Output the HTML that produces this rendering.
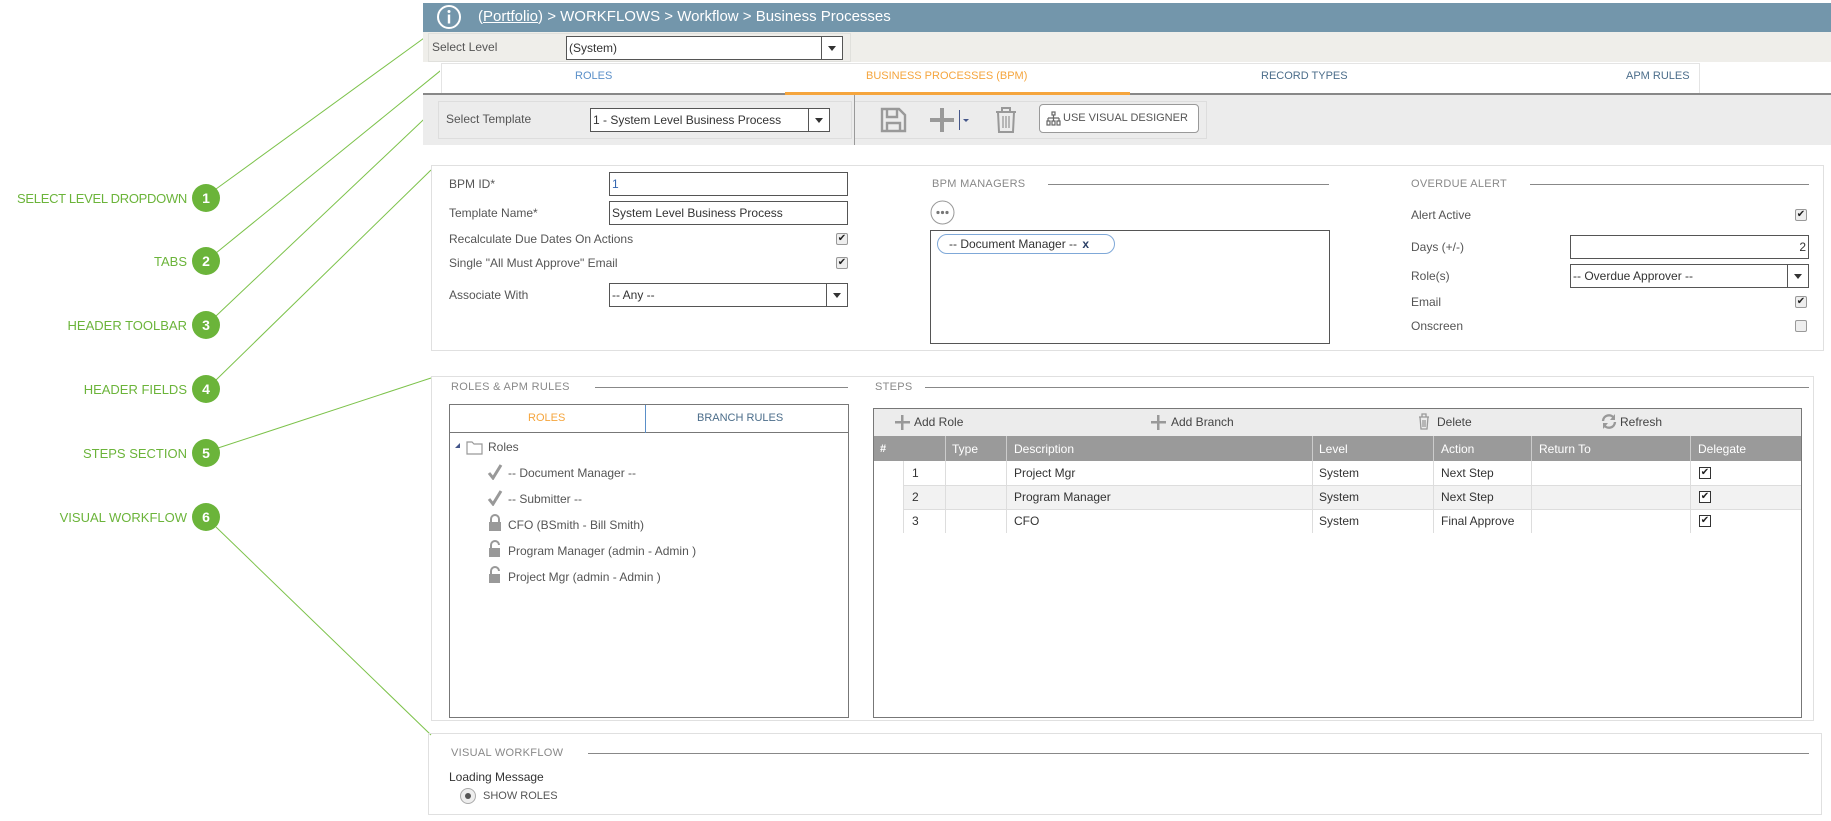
<!DOCTYPE html>
<html><head><meta charset="utf-8"><style>
*{box-sizing:border-box;margin:0;padding:0}
body{width:1831px;height:821px;position:relative;background:#fff;font-family:"Liberation Sans",sans-serif;font-size:12px;color:#555;overflow:hidden}
.a{position:absolute}
.t{position:absolute;white-space:nowrap;line-height:14px}
.ann{position:absolute;right:1644px;color:#6bb43a;font-size:13px;white-space:nowrap;line-height:16px}
.num{position:absolute;width:28px;height:28px;border-radius:50%;background:#6bb43a;color:#fff;font-size:14px;font-weight:bold;text-align:center;line-height:28px}
.inp{position:absolute;border:1px solid #555;background:#fff;height:24px;padding:4px 2px;color:#333;line-height:14px;white-space:nowrap}
.dd{position:absolute;border:1px solid #555;background:#fff;height:24px;padding:4px 2px;color:#333;line-height:14px;white-space:nowrap}
.dd:after{content:"";position:absolute;right:0;top:0;width:20px;height:22px;border-left:1px solid #555}
.dd i{position:absolute;right:6px;top:9px;border-left:4px solid transparent;border-right:4px solid transparent;border-top:5px solid #333}
.cb{position:absolute;width:12px;height:12px;border:1px solid #999;border-radius:2px;background:#eee;font-size:10px;line-height:10px;text-align:center;color:#222}
.sec{position:absolute;color:#888;font-size:11px;letter-spacing:.3px;line-height:14px}
.hl{position:absolute;height:1px;background:#888}
.lbl{color:#555}
</style></head><body>

<svg class="a" style="left:0;top:0" width="440" height="821">
<g stroke="#7cc24a" stroke-width="1" fill="none">
<line x1="216" y1="189" x2="431" y2="33"/>
<line x1="216" y1="253" x2="445" y2="67"/>
<line x1="216" y1="316" x2="439" y2="105"/>
<line x1="216" y1="380" x2="431" y2="170"/>
<line x1="218" y1="448" x2="431" y2="378"/>
<line x1="216" y1="527" x2="431" y2="735"/>
</g></svg>
<div class="ann" style="top:191px;letter-spacing:-0.3px">SELECT LEVEL DROPDOWN</div><div class="num" style="left:192px;top:184px">1</div>
<div class="ann" style="top:254px">TABS</div><div class="num" style="left:192px;top:247px">2</div>
<div class="ann" style="top:318px">HEADER TOOLBAR</div><div class="num" style="left:192px;top:311px">3</div>
<div class="ann" style="top:382px">HEADER FIELDS</div><div class="num" style="left:192px;top:375px">4</div>
<div class="ann" style="top:446px">STEPS SECTION</div><div class="num" style="left:192px;top:439px">5</div>
<div class="ann" style="top:510px">VISUAL WORKFLOW</div><div class="num" style="left:192px;top:503px">6</div>

<div class="a" style="left:423px;top:3px;width:1408px;height:29px;background:#7396ab"></div>
<svg class="a" style="left:436px;top:4px" width="26" height="26"><circle cx="13" cy="13" r="11" fill="none" stroke="#fff" stroke-width="2"/><circle cx="13" cy="7.5" r="1.5" fill="#fff"/><rect x="11.8" y="10.5" width="2.4" height="9" fill="#fff"/></svg>
<div class="t" style="left:478px;top:8px;color:#fff;font-size:15px;line-height:18px">(<u>Portfolio</u>) &gt; WORKFLOWS &gt; Workflow &gt; Business Processes</div>

<div class="a" style="left:423px;top:32px;width:1408px;height:30px;background:#efeeea"></div>
<div class="a" style="left:428px;top:33px;width:423px;height:29px;border:1px solid #e0e0dc"></div>
<div class="t lbl" style="left:432px;top:40px">Select Level</div>
<div class="dd" style="left:566px;top:36px;width:277px">(System)<i></i></div>

<div class="a" style="left:441px;top:63px;width:1259px;height:31px;border:1px solid #e4e4e4;border-bottom:none"></div>
<div class="a" style="left:423px;top:93px;width:1408px;height:2px;background:#888"></div>
<div class="a" style="left:785px;top:92px;width:345px;height:3px;background:#f5a53d"></div>
<div class="t" style="left:575px;top:69px;color:#5a8fc8;font-size:11px">ROLES</div>
<div class="t" style="left:866px;top:69px;color:#f5a53d;font-size:11px">BUSINESS PROCESSES (BPM)</div>
<div class="t" style="left:1261px;top:69px;color:#4b6d8a;font-size:11px">RECORD TYPES</div>
<div class="t" style="left:1626px;top:69px;color:#4b6d8a;font-size:11px">APM RULES</div>

<div class="a" style="left:423px;top:95px;width:1408px;height:50px;background:#ececec"></div>
<div class="a" style="left:438px;top:101px;width:414px;height:38px;border:1px solid #ddd"></div>
<div class="a" style="left:854px;top:95px;width:1px;height:50px;background:#999"></div>
<div class="a" style="left:855px;top:101px;width:352px;height:38px;border:1px solid #ddd;border-left:none"></div>
<div class="t lbl" style="left:446px;top:112px">Select Template</div>
<div class="dd" style="left:590px;top:108px;width:240px">1 - System Level Business Process<i></i></div>
<svg class="a" style="left:879px;top:106px" width="30" height="28"><g fill="none" stroke="#999" stroke-width="2.4"><path d="M3 3h17l6 6v16H3z"/><path d="M8 3v8h10V3"/><path d="M8 25v-8h13v8"/></g></svg>
<svg class="a" style="left:929px;top:106px" width="50" height="28"><rect x="11" y="2" width="4" height="24" fill="#999"/><rect x="1" y="12" width="24" height="4" fill="#999"/><rect x="30" y="4" width="1" height="20" fill="#44568a"/><path d="M34 13h6l-3 3z" fill="#44568a"/></svg>
<svg class="a" style="left:994px;top:106px" width="24" height="28"><g fill="none" stroke="#999" stroke-width="2"><path d="M2 6h20M8 6V2h8v4M4 6l1 20h14l1-20"/><path d="M9 10v12M12 10v12M15 10v12" stroke-width="1.3"/></g></svg>
<div class="a" style="left:1039px;top:104px;width:160px;height:29px;border:1px solid #999;border-radius:4px;background:#fff"></div>
<svg class="a" style="left:1046px;top:111px" width="16" height="16"><g fill="none" stroke="#666" stroke-width="1.2"><rect x="6" y="1" width="3" height="3"/><path d="M7.5 4v3M2 7h11M2 7v3M7.5 7v3M13 7v3"/><rect x="1" y="10" width="3" height="4"/><rect x="6" y="10" width="3" height="4"/><rect x="11" y="10" width="3" height="4"/></g></svg>
<div class="t" style="left:1063px;top:111px;color:#555;font-size:11px">USE VISUAL DESIGNER</div>

<div class="a" style="left:431px;top:165px;width:1393px;height:186px;border:1px solid #e0e0e0"></div>
<div class="t lbl" style="left:449px;top:177px">BPM ID*</div>
<div class="inp" style="left:609px;top:172px;width:239px;color:#3466b0">1</div>
<div class="t lbl" style="left:449px;top:206px">Template Name*</div>
<div class="inp" style="left:609px;top:201px;width:239px">System Level Business Process</div>
<div class="t lbl" style="left:449px;top:232px">Recalculate Due Dates On Actions</div>
<div class="cb" style="left:836px;top:233px">✔</div>
<div class="t lbl" style="left:449px;top:256px">Single "All Must Approve" Email</div>
<div class="cb" style="left:836px;top:257px">✔</div>
<div class="t lbl" style="left:449px;top:288px">Associate With</div>
<div class="dd" style="left:609px;top:283px;width:239px">-- Any --<i></i></div>

<div class="sec" style="left:932px;top:177px">BPM MANAGERS</div>
<div class="hl" style="left:1048px;top:184px;width:281px"></div>
<svg class="a" style="left:930px;top:200px" width="25" height="25"><circle cx="12.5" cy="12.5" r="11.5" fill="#fff" stroke="#999"/><circle cx="8" cy="12.5" r="1.6" fill="#777"/><circle cx="12.5" cy="12.5" r="1.6" fill="#777"/><circle cx="17" cy="12.5" r="1.6" fill="#777"/></svg>
<div class="a" style="left:930px;top:230px;width:400px;height:114px;border:1px solid #555"></div>
<div class="a" style="left:937px;top:234px;width:178px;height:20px;border:1px solid #7fa8d8;border-radius:10px;color:#333;padding:2px 0 0 11px;line-height:14px;white-space:nowrap">-- Document Manager -- <b style="color:#2a3f66;margin-left:2px">x</b></div>

<div class="sec" style="left:1411px;top:177px">OVERDUE ALERT</div>
<div class="hl" style="left:1530px;top:184px;width:279px"></div>
<div class="t lbl" style="left:1411px;top:208px">Alert Active</div>
<div class="cb" style="left:1795px;top:209px">✔</div>
<div class="t lbl" style="left:1411px;top:240px">Days (+/-)</div>
<div class="inp" style="left:1570px;top:235px;width:239px;text-align:right">2</div>
<div class="t lbl" style="left:1411px;top:269px">Role(s)</div>
<div class="dd" style="left:1570px;top:264px;width:239px">-- Overdue Approver --<i></i></div>
<div class="t lbl" style="left:1411px;top:295px">Email</div>
<div class="cb" style="left:1795px;top:296px">✔</div>
<div class="t lbl" style="left:1411px;top:319px">Onscreen</div>
<div class="cb" style="left:1795px;top:320px"></div>

<div class="a" style="left:431px;top:376px;width:1383px;height:345px;border:1px solid #e0e0e0"></div>
<div class="sec" style="left:451px;top:380px">ROLES &amp; APM RULES</div>
<div class="hl" style="left:595px;top:387px;width:253px"></div>
<div class="sec" style="left:875px;top:380px">STEPS</div>
<div class="hl" style="left:925px;top:387px;width:884px"></div>

<div class="a" style="left:449px;top:404px;width:400px;height:314px;border:1px solid #777"></div>
<div class="a" style="left:449px;top:432px;width:400px;height:1px;background:#777"></div>
<div class="a" style="left:645px;top:405px;width:1px;height:28px;background:#5a8fc8"></div>
<div class="t" style="left:528px;top:411px;color:#f5a53d;font-size:11px">ROLES</div>
<div class="t" style="left:697px;top:411px;color:#4b6d8a;font-size:11px">BRANCH RULES</div>
<div class="a" style="left:455px;top:443px;border-left:5px solid transparent;border-bottom:5px solid #44568a"></div>
<svg class="a" style="left:466px;top:440px" width="18" height="15"><path d="M1 2h5l2 2h8v10H1z" fill="none" stroke="#999" stroke-width="1.2"/></svg>
<div class="t" style="left:488px;top:440px">Roles</div>
<svg class="a" style="left:487px;top:464px" width="16" height="16"><path d="M2 9l4 5L14 1" fill="none" stroke="#999" stroke-width="3"/></svg>
<div class="t" style="left:508px;top:466px">-- Document Manager --</div>
<svg class="a" style="left:487px;top:490px" width="16" height="16"><path d="M2 9l4 5L14 1" fill="none" stroke="#999" stroke-width="3"/></svg>
<div class="t" style="left:508px;top:492px">-- Submitter --</div>
<svg class="a" style="left:487px;top:514px" width="16" height="18"><path d="M4 8V5a4 4 0 0 1 8 0v3" fill="none" stroke="#999" stroke-width="2"/><rect x="2" y="8" width="12" height="9" fill="#999"/></svg>
<div class="t" style="left:508px;top:518px">CFO (BSmith - Bill Smith)</div>
<svg class="a" style="left:487px;top:540px" width="16" height="18"><path d="M4 8V5a4 4 0 0 1 8 0" fill="none" stroke="#999" stroke-width="2"/><rect x="2" y="8" width="11" height="9" fill="#999"/></svg>
<div class="t" style="left:508px;top:544px">Program Manager (admin - Admin )</div>
<svg class="a" style="left:487px;top:566px" width="16" height="18"><path d="M4 8V5a4 4 0 0 1 8 0" fill="none" stroke="#999" stroke-width="2"/><rect x="2" y="8" width="11" height="9" fill="#999"/></svg>
<div class="t" style="left:508px;top:570px">Project Mgr (admin - Admin )</div>

<div class="a" style="left:873px;top:408px;width:929px;height:310px;border:1px solid #777"></div>
<div class="a" style="left:874px;top:409px;width:927px;height:27px;background:#ececec"></div>
<svg class="a" style="left:894px;top:414px" width="16" height="16"><rect x="7" y="1" width="2.5" height="15" fill="#999"/><rect x="1" y="7" width="15" height="2.5" fill="#999"/></svg>
<div class="t" style="left:914px;top:415px;color:#444">Add Role</div>
<svg class="a" style="left:1150px;top:414px" width="16" height="16"><rect x="7" y="1" width="2.5" height="15" fill="#999"/><rect x="1" y="7" width="15" height="2.5" fill="#999"/></svg>
<div class="t" style="left:1171px;top:415px;color:#444">Add Branch</div>
<svg class="a" style="left:1418px;top:413px" width="12" height="17"><g fill="none" stroke="#999" stroke-width="1.3"><path d="M1 4h10M4 4V1h4v3M2 4l1 12h6l1-12M5 7v7M7 7v7"/></g></svg>
<div class="t" style="left:1437px;top:415px;color:#444">Delete</div>
<svg class="a" style="left:1601px;top:413px" width="16" height="17"><g fill="none" stroke="#999" stroke-width="2.4"><path d="M2 8a6 6 0 0 1 11-3M14 9a6 6 0 0 1-11 3"/></g><path d="M14 1v6h-5z M2 16v-6h5z" fill="#999"/></svg>
<div class="t" style="left:1620px;top:415px;color:#444">Refresh</div>

<div class="a" style="left:874px;top:436px;width:927px;height:25px;background:#9a9a9a"></div>
<div class="a" style="left:945px;top:436px;width:1px;height:25px;background:#ccc"></div>
<div class="a" style="left:1006px;top:436px;width:1px;height:25px;background:#ccc"></div>
<div class="a" style="left:1312px;top:436px;width:1px;height:25px;background:#ccc"></div>
<div class="a" style="left:1433px;top:436px;width:1px;height:25px;background:#ccc"></div>
<div class="a" style="left:1531px;top:436px;width:1px;height:25px;background:#ccc"></div>
<div class="a" style="left:1690px;top:436px;width:1px;height:25px;background:#ccc"></div>
<div class="t" style="left:880px;top:442px;color:#fff;font-weight:bold;font-size:11px">#</div>
<div class="t" style="left:952px;top:442px;color:#fff">Type</div>
<div class="t" style="left:1014px;top:442px;color:#fff">Description</div>
<div class="t" style="left:1319px;top:442px;color:#fff">Level</div>
<div class="t" style="left:1441px;top:442px;color:#fff">Action</div>
<div class="t" style="left:1539px;top:442px;color:#fff">Return To</div>
<div class="t" style="left:1698px;top:442px;color:#fff">Delegate</div>

<div class="a" style="left:903px;top:485px;width:898px;height:24px;background:#f2f2f2"></div>
<div class="a" style="left:903px;top:485px;width:898px;height:1px;background:#ddd"></div>
<div class="a" style="left:903px;top:509px;width:898px;height:1px;background:#ddd"></div>
<div class="a" style="left:903px;top:461px;width:1px;height:72px;background:#ddd"></div>
<div class="a" style="left:945px;top:461px;width:1px;height:72px;background:#ddd"></div>
<div class="a" style="left:1006px;top:461px;width:1px;height:72px;background:#ddd"></div>
<div class="a" style="left:1312px;top:461px;width:1px;height:72px;background:#ddd"></div>
<div class="a" style="left:1433px;top:461px;width:1px;height:72px;background:#ddd"></div>
<div class="a" style="left:1531px;top:461px;width:1px;height:72px;background:#ddd"></div>
<div class="a" style="left:1690px;top:461px;width:1px;height:72px;background:#ddd"></div>

<div class="t" style="left:912px;top:466px;color:#333">1</div>
<div class="t" style="left:1014px;top:466px;color:#333">Project Mgr</div>
<div class="t" style="left:1319px;top:466px;color:#333">System</div>
<div class="t" style="left:1441px;top:466px;color:#333">Next Step</div>
<div class="cb" style="left:1699px;top:467px;border-color:#333;background:#fff;border-radius:0">✔</div>
<div class="t" style="left:912px;top:490px;color:#333">2</div>
<div class="t" style="left:1014px;top:490px;color:#333">Program Manager</div>
<div class="t" style="left:1319px;top:490px;color:#333">System</div>
<div class="t" style="left:1441px;top:490px;color:#333">Next Step</div>
<div class="cb" style="left:1699px;top:491px;border-color:#333;background:#fff;border-radius:0">✔</div>
<div class="t" style="left:912px;top:514px;color:#333">3</div>
<div class="t" style="left:1014px;top:514px;color:#333">CFO</div>
<div class="t" style="left:1319px;top:514px;color:#333">System</div>
<div class="t" style="left:1441px;top:514px;color:#333">Final Approve</div>
<div class="cb" style="left:1699px;top:515px;border-color:#333;background:#fff;border-radius:0">✔</div>

<div class="a" style="left:428px;top:733px;width:1394px;height:82px;border:1px solid #e0e0e0"></div>
<div class="sec" style="left:451px;top:746px">VISUAL WORKFLOW</div>
<div class="hl" style="left:588px;top:753px;width:1221px"></div>
<div class="t" style="left:449px;top:770px;color:#333">Loading Message</div>
<div class="a" style="left:460px;top:788px;width:16px;height:16px;border:1px solid #aaa;border-radius:50%;background:#eee"></div>
<div class="a" style="left:465px;top:793px;width:6px;height:6px;border-radius:50%;background:#555"></div>
<div class="t" style="left:483px;top:789px;font-size:11px">SHOW ROLES</div>
</body></html>
